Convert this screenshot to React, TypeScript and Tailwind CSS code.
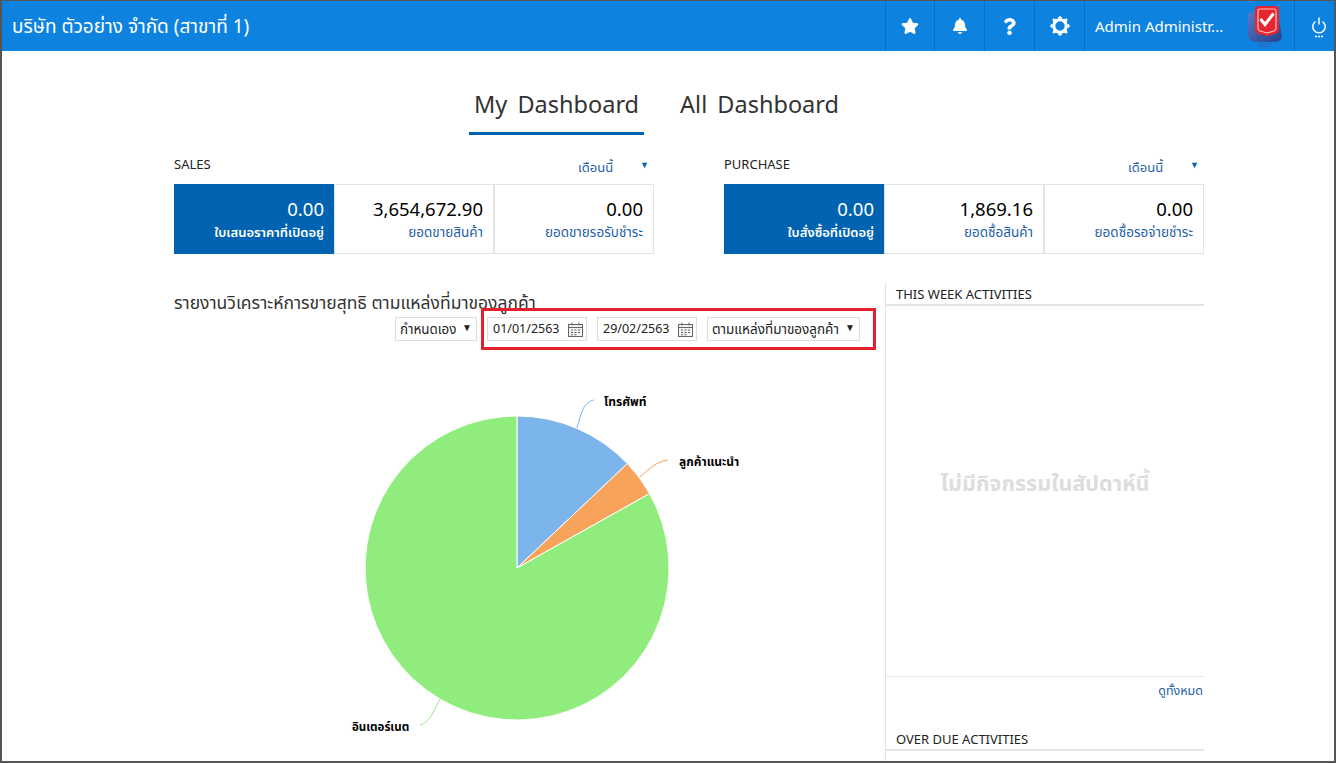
import { FaBell, FaQuestion, FaStar } from "react-icons/fa";

const font = "font-['Noto_Sans','Noto_Sans_Thai','Open_Sans',sans-serif]";

function Gear() {
  return (
    <svg width="20" height="20" viewBox="0 0 20 20" fill="none">
      <circle cx="10" cy="10" r="6.2" stroke="white" strokeWidth="3" />
      <path d="M8 2h4l-2-1.5zM8 18h4l-2 1.5zM2 8v4l-1.5-2zM18 8v4l1.5-2zM3.5 6l2.500-2.500-3-.5zM14 3.500l2.500 2.500.5-3zM3.500 14l2.500 2.500-3 .5zM16.500 14l-2.500 2.500 3 .5z" fill="white" stroke="white" />
    </svg>
  );
}

function Power() {
  return (
    <svg width="18" height="24" viewBox="0 0 18 24" fill="none" stroke="white">
      <path d="M5.500 5.500a6.200 6.200 0 1 0 7 0" strokeWidth="1.500" />
      <path d="M9 1.500v7" strokeWidth="1.500" />
      <path d="M5 20.500h2M8 20.500h2M11 20.500h2" strokeWidth="1.500" />
    </svg>
  );
}

function Logo() {
  return (
    <svg width="36" height="42" viewBox="0 0 36 42">
      <defs>
        <linearGradient id="shade" x1="0" y1="0" x2="1" y2="1">
          <stop offset="0" stopColor="#5a78c8" />
          <stop offset="1" stopColor="#26408a" />
        </linearGradient>
      </defs>
      <path d="M1 9 L9 6 H30 L35 31 Q35 36 28 37 H8 Q1 36 1 28 Z" fill="url(#shade)" />
      <path d="M12 1 H28 Q32 1 32 5 V24 Q32 28 28 29 L20 31 L12 29 Q8 28 8 24 V5 Q8 1 12 1 Z" fill="#e5262f" />
      <path d="M13 4 H27 Q29 4 29 6 V23 Q29 25.500 27 26 L20 28 L13 26 Q11 25.500 11 23 V6 Q11 4 13 4 Z" fill="none" stroke="#fbc4c4" strokeWidth="1.200" />
      <path d="M13.500 14l4.500 5.500 8.500-11" fill="none" stroke="white" strokeWidth="3" />
      <text x="19" y="41.500" textAnchor="middle" fontSize="5" fill="#3c5aa6" fontFamily="Liberation Sans">SOFT</text>
    </svg>
  );
}

function Calendar() {
  return (
    <svg width="15" height="15" viewBox="0 0 15 15" fill="none" stroke="#666">
      <rect x="0.500" y="2.500" width="14" height="12" fill="#f3f3f3" />
      <path d="M0.500 5.500h14M4 0.500v3M11 0.500v3" />
      <path d="M3 8h2M6.500 8h2M10 8h2M3 10.500h2M6.500 10.500h2M10 10.500h2M3 12.800h2M6.500 12.800h2" strokeWidth="1" />
    </svg>
  );
}

function NavIcon({ children, first }: { children: React.ReactNode; first?: boolean }) {
  return (
    <div className={first ? "flex h-full w-[49px] items-center justify-center border-l border-[#0b6cb8]" : "flex h-full w-[50px] items-center justify-center border-l border-[#0b6cb8]"}>
      {children}
    </div>
  );
}

function StatCard({ value, label, active }: { value: string; label: string; active?: boolean }) {
  return (
    <div
      className={
        active
          ? "flex h-[70px] w-[160px] flex-col items-end bg-[#0063b1] pr-[10px] pt-[13px] text-white"
          : "flex h-[70px] w-[160px] flex-col items-end border border-[#e3e3e3] pr-[10px] pt-[12px] text-black"
      }
    >
      <div className="text-[18.500px] leading-[24px]">{value}</div>
      <div className={active ? "mt-[2px] text-[13px] font-semibold leading-[18px]" : "mt-[2px] text-[13.500px] leading-[18px] text-[#1f5fa8]"}>
        {label}
      </div>
    </div>
  );
}

function StatGroup({ title, cards }: { title: string; cards: { value: string; label: string; active?: boolean }[] }) {
  return (
    <div className="w-[480px]">
      <div className="flex h-[34px] items-start justify-between">
        <span className="mt-[4px] text-[13px] leading-[20px] text-[#222]">{title}</span>
        <div className="mt-[5px] flex items-center text-[13px] leading-[20px] text-[#1f5fa8]">
          <span className="w-[62px]">เดือนนี้</span>
          <span className="mb-[4px] mr-[5px] text-[9px] text-[#0063b1]">▼</span>
        </div>
      </div>
      <div className="flex">
        {cards.map((c) => (
          <StatCard key={c.label} {...c} />
        ))}
      </div>
    </div>
  );
}

function DateBox({ value, w }: { value: string; w: string }) {
  return (
    <div className={`flex h-[24px] items-center justify-between border border-[#ddd] pl-[5px] pr-[3px] text-[12.500px] text-[#222] ${w}`}>
      <span>{value}</span>
      <Calendar />
    </div>
  );
}

export default function App() {
  return (
    <div className={`h-[763px] w-[1336px] overflow-hidden border-b-2 border-l-2 border-r-2 border-t border-[#555] bg-white ${font}`}>
      {/* top bar */}
      <header className="flex h-[50px] items-center bg-[#0d82df] text-white">
        <div className="flex-1 pl-[10px] text-[19px]">บริษัท ตัวอย่าง จำกัด (สาขาที่ 1)</div>
        <NavIcon first><FaStar size={18} /></NavIcon>
        <NavIcon><FaBell size={16} /></NavIcon>
        <NavIcon><FaQuestion size={17} /></NavIcon>
        <NavIcon><Gear /></NavIcon>
        <div className="flex h-full w-[210px] items-center justify-between border-l border-[#0b6cb8] pl-[10px] pr-[11px]">
          <span className="text-[15px]">Admin Administr...</span>
          <Logo />
        </div>
        <div className="flex h-full w-[40px] items-center justify-center border-l border-[#0b6cb8] pl-[8px] pt-[4px]">
          <Power />
        </div>
      </header>

      <main className="ml-[172px] w-[1030px]">
        {/* tabs */}
        <div className="flex h-[84px] items-end gap-[31px] pl-[295px]">
          <div className="border-b-[3px] border-[#0063b1] px-[5px] pb-[12px] text-[23.500px] leading-[32px] text-[#333] [word-spacing:4px]">
            My Dashboard
          </div>
          <div className="px-[5px] pb-[15px] text-[23.500px] leading-[32px] text-[#333] [word-spacing:4px]">
            All Dashboard
          </div>
        </div>

        <div className="mt-[15px] flex justify-between">
          <StatGroup
            title="SALES"
            cards={[
              { value: "0.00", label: "ใบเสนอราคาที่เปิดอยู่", active: true },
              { value: "3,654,672.90", label: "ยอดขายสินค้า" },
              { value: "0.00", label: "ยอดขายรอรับชำระ" },
            ]}
          />
          <StatGroup
            title="PURCHASE"
            cards={[
              { value: "0.00", label: "ใบสั่งซื้อที่เปิดอยู่", active: true },
              { value: "1,869.16", label: "ยอดซื้อสินค้า" },
              { value: "0.00", label: "ยอดซื้อรอจ่ายชำระ" },
            ]}
          />
        </div>

        <div className="mt-[29px] flex">
          {/* report */}
          <section className="w-[711px]">
            <h2 className="mt-[7px] h-[18px] text-[17.500px] leading-[24px] text-[#333]">
              รายงานวิเคราะห์การขายสุทธิ ตามแหล่งที่มาของลูกค้า
            </h2>
            <div className="flex items-center justify-end pr-[9px]">
              <div className="mr-[4px] flex h-[24px] w-[82px] items-center justify-between border border-[#ddd] px-[4px] text-[13.400px] text-[#222]">
                <span>กำหนดเอง</span>
                <span className="mb-[4px] text-[10px]">▼</span>
              </div>
              <div className="flex h-[42px] w-[395px] items-center gap-[10px] border-[3px] border-[#e4202c] pl-[3px]">
                <DateBox value="01/01/2563" w="w-[100px]" />
                <DateBox value="29/02/2563" w="w-[100px]" />
                <div className="flex h-[24px] w-[153px] items-center justify-between border border-[#ddd] px-[4px] text-[13.500px] text-[#222]">
                  <span className="whitespace-nowrap">ตามแหล่งที่มาของลูกค้า</span>
                  <span className="mb-[4px] text-[10px]">▼</span>
                </div>
              </div>
            </div>
            <svg width="711" height="413" viewBox="174 350 711 413" className="block">
              <path d="M517 568 L517 416 A152 152 0 0 1 627.400 463.600 Z" fill="#7cb5ec" stroke="white" />
              <path d="M517 568 L627.400 463.600 A152 152 0 0 1 649.600 493.600 Z" fill="#f7a35c" stroke="white" />
              <path d="M517 568 L649.600 493.600 A152 152 0 1 1 517 416 Z" fill="#90ed7d" stroke="white" />
              <path d="M577 428 C582 410 584 402 594 400" fill="none" stroke="#7cb5ec" />
              <path d="M640 477 C650 468 656 462 668 460" fill="none" stroke="#f7a35c" />
              <path d="M440 699 C432 714 430 722 420 725" fill="none" stroke="#90ed7d" />
              <g fontWeight="700" fill="#000">
                <text x="604" y="406" fontSize="12">โทรศัพท์</text>
                <text x="679" y="466" fontSize="12">ลูกค้าแนะนำ</text>
                <text x="352" y="731" fontSize="11.500">อินเตอร์เนต</text>
              </g>
            </svg>
          </section>

          {/* activities */}
          <aside className="h-[480px] w-[319px] border-l border-[#e3e3e3]">
            <div className="flex h-[23px] items-center border-b-2 border-[#e5e5e5] pl-[10px] pt-[2px] text-[13px] text-[#222]">
              THIS WEEK ACTIVITIES
            </div>
            <div className="flex h-[371px] items-center justify-center border-b border-[#e5e5e5] pb-[16px] text-[21.600px] font-bold text-[#ddd]">
              ไม่มีกิจกรรมในสัปดาห์นี้
            </div>
            <div className="mt-[6px] pr-[1px] text-right text-[12.500px] leading-[16px] text-[#1f5fa8]">ดูทั้งหมด</div>
            <div className="mt-[32px] flex h-[20px] items-center border-b-2 border-[#e5e5e5] pl-[10px] text-[13px] text-[#222]">
              OVER DUE ACTIVITIES
            </div>
          </aside>
        </div>
      </main>
    </div>
  );
}
